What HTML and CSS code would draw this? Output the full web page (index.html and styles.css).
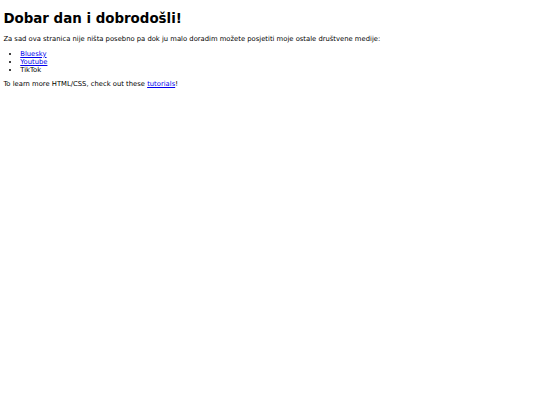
FILE: index.html
```html
<!DOCTYPE html>
<html>
<head>
<meta charset="utf-8">
<title>Dobar dan</title>
<link rel="stylesheet" href="styles.css">
</head>
<body class="page">
<h1 class="title">Dobar dan i dobrodošli!</h1>
<p class="text">Za sad ova stranica nije ništa posebno pa dok ju malo doradim možete posjetiti moje ostale društvene medije:</p>
<ul class="links">
<li><a href="#">Bluesky</a></li>
<li><a href="#">Youtube</a></li>
<li>TikTok</li>
</ul>
<p class="text">To learn more HTML/CSS, check out these <a href="#">tutorials</a>!</p>
</body>
</html>
```
FILE: styles.css
```css
html { background: #fff; }
.page {
  margin: 3.375px;
  font-family: "DejaVu Sans", sans-serif;
  font-size: 6.8px;
  color: #000;
}
.title {
  font-size: 13.4px;
  font-weight: bold;
  margin: 8px 0 8.5px;
}
.text { margin: 6.75px 0; }
.links { margin: 6.75px 0; padding-left: 16.875px; }
a { color: #0000ee; }
```
